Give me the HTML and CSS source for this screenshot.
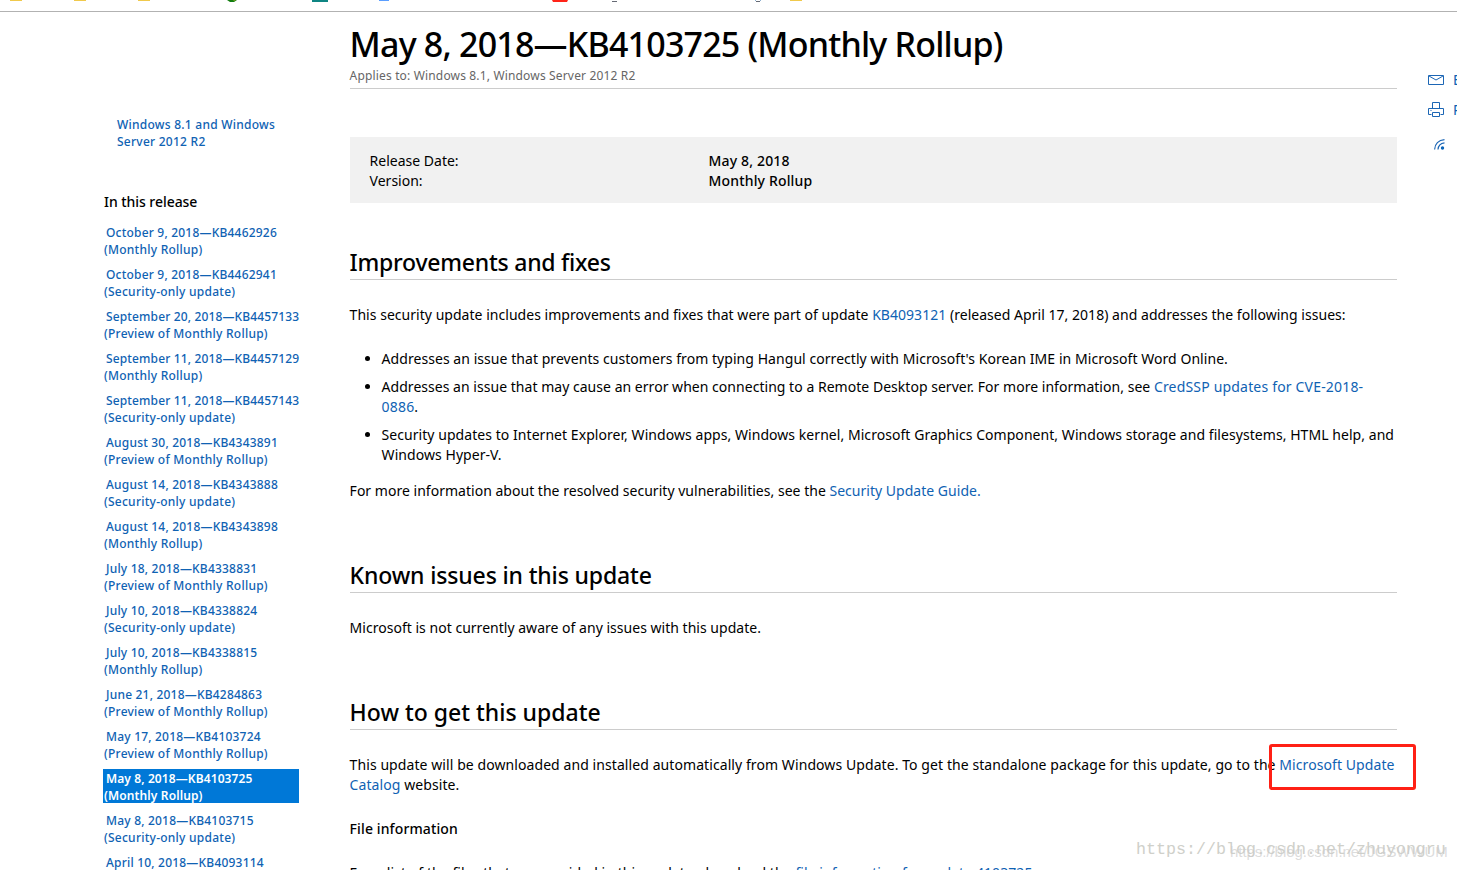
FILE: index.html
```
<!DOCTYPE html>
<html lang="en">
<head>
<meta charset="utf-8">
<title>May 8, 2018—KB4103725 (Monthly Rollup)</title>
<link rel="stylesheet" href="styles.css">
</head>
<body>
<div class="bookmarks">
  <svg width="820" height="11" viewBox="0 0 820 11">
    <path fill="#f0c94c" d="M10 0h12v1h-12zM74 0h12v1h-12zM138 0h12v1h-12zM790 0h12v1h-12z"/>
    <path fill="#127d10" d="M227 0h10l-3 2h-4z"/><path fill="#8aa51b" d="M233 0h3l-2 1z"/>
    <path fill="#0f8583" d="M312 0h16v2h-16z"/>
    <path fill="#5b9eff" d="M379 0h10v1h-10z"/>
    <path fill="#ff2419" d="M552 0h16l-1 2h-14z"/>
    <path fill="#666a75" d="M612 1h5v1h-5zM756 1h4v1h-4z"/><path fill="#8fb0cf" d="M755 0h1v1h-1zM760 0h1v1h-1z"/>
  </svg>
</div>
<div class="page">
  <nav class="sidebar">
    <a class="product">Windows 8.1 and Windows<br>Server 2012 R2</a>
    <h4 class="nav-title">In this release</h4>
    <ul class="releases">
      <li><a>October 9, 2018—KB4462926</a><br>(Monthly Rollup)</li>
      <li><a>October 9, 2018—KB4462941</a><br>(Security-only update)</li>
      <li><a class="long">September 20, 2018—KB4457133</a><br>(Preview of Monthly Rollup)</li>
      <li><a class="long">September 11, 2018—KB4457129</a><br>(Monthly Rollup)</li>
      <li><a class="long">September 11, 2018—KB4457143</a><br>(Security-only update)</li>
      <li><a>August 30, 2018—KB4343891</a><br>(Preview of Monthly Rollup)</li>
      <li><a>August 14, 2018—KB4343888</a><br>(Security-only update)</li>
      <li><a>August 14, 2018—KB4343898</a><br>(Monthly Rollup)</li>
      <li><a>July 18, 2018—KB4338831</a><br>(Preview of Monthly Rollup)</li>
      <li><a>July 10, 2018—KB4338824</a><br>(Security-only update)</li>
      <li><a>July 10, 2018—KB4338815</a><br>(Monthly Rollup)</li>
      <li><a>June 21, 2018—KB4284863</a><br>(Preview of Monthly Rollup)</li>
      <li><a>May 17, 2018—KB4103724</a><br>(Preview of Monthly Rollup)</li>
      <li class="current"><a>May 8, 2018—KB4103725</a><br>(Monthly Rollup)</li>
      <li><a>May 8, 2018—KB4103715</a><br>(Security-only update)</li>
      <li><a>April 10, 2018—KB4093114</a></li>
    </ul>
  </nav>
  <main class="article">
    <h1>May 8, 2018—KB4103725 (Monthly Rollup)</h1>
    <p class="applies">Applies to: Windows 8.1, Windows Server 2012 R2</p>
    <dl class="facts">
      <dt>Release Date:</dt><dd>May 8, 2018</dd>
      <dt>Version:</dt><dd>Monthly Rollup</dd>
    </dl>
    <h2 class="h-improve">Improvements and fixes</h2>
    <p class="intro">This security update includes improvements and fixes that were part of update <a>KB4093121</a> (released April 17, 2018) and addresses the following issues:</p>
    <ul class="fixes">
      <li>Addresses an issue that prevents customers from typing Hangul correctly with Microsoft's Korean IME in Microsoft Word Online.</li>
      <li><span class="tight">Addresses an issue that may cause an error when connecting to a Remote Desktop server. For more information, see </span><a class="cve">CredSSP updates for CVE-2018-<br>0886</a>.</li>
      <li>Security updates to Internet Explorer, Windows apps, Windows kernel, Microsoft Graphics Component, Windows storage and filesystems, HTML help, and<br>Windows Hyper-V.</li>
    </ul>
    <p class="more">For more information about the resolved security vulnerabilities, see the <a>Security Update Guide.</a></p>
    <h2 class="h-known">Known issues in this update</h2>
    <p class="more">Microsoft is not currently aware of any issues with this update.</p>
    <h2 class="h-get">How to get this update</h2>
    <p class="get">This update will be downloaded and installed automatically from Windows Update. To get the standalone package for this update, go to the <a class="marked">Microsoft Update</a><br><a>Catalog</a> website.</p>
    <h5>File information</h5>
    <p class="get">For a list of the files that are provided in this update, download the <a>file information for update 4103725</a>.</p>
  </main>
  <aside class="actions">
    <a class="email"><svg width="16" height="12" viewBox="0 0 16 12" fill="none" stroke="#1c66b5"><path d="M.5 1.500h15v9H.5zM1 2l7 4L15 2"/></svg>Email</a>
    <a class="print"><svg width="16" height="16" viewBox="0 0 16 16" fill="none" stroke="#1c66b5"><path d="M4.500 6.500v-6h7v6M3.500 12.500h-3v-6h15v6h-3M4.500 10.500h7v4h-7zM2.500 8.500h1"/></svg>Print</a>
    <a class="rss"><svg width="11" height="11" viewBox="0 0 11 11" fill="none" stroke="#1c66b5" stroke-width="1.200"><path d="M.6 10.500C.8 5 4.500 1 10.500.7M4 10.500C4.300 6.500 6.700 4.200 10.500 3.800"/><circle cx="8.500" cy="9" r="1.700" fill="#0a63b8" stroke="none"/></svg></a>
  </aside>
</div>
<div class="watermark wm-back">https://blog.csdn.net/zhuyongru</div>
<div class="watermark wm-front">https://blog.csdn.net/JGSWWUM</div>
</body>
</html>
```
FILE: styles.css
```
*, *::after { box-sizing: border-box; }
body {
  position: relative;
  margin: 0;
  width: 1457px;
  height: 870px;
  overflow: hidden;
  background: #fff;
  color: #000;
  font: 400 14px/20px "Noto Sans", "Open Sans", sans-serif;
  white-space: nowrap;
}
h1, h2, h4, h5, p, ul, dl, dd { margin: 0; padding: 0; }
a { color: #0f62b3; }

.bookmarks { height: 12px; border-bottom: 1px solid #b2b2b2; }
.bookmarks svg { display: block; }

.page {
  display: grid;
  grid-template-columns: 196px 1048px 60px;
  column-gap: 50px;
  padding-left: 103px;
}

.sidebar {
  padding-top: 104px;
  font-size: 12px;
  line-height: 17px;
  font-weight: 500;
  letter-spacing: .25px;
  color: #0f62b3;
}
.product { display: block; padding-left: 14px; }
.nav-title {
  margin: 42px 0 11px;
  padding-left: 1px;
  font-size: 14px;
  line-height: 20px;
  font-weight: 500;
  letter-spacing: -.05px;
  color: #000;
}
.releases { display: grid; grid-template-columns: 100%; gap: 8px; list-style: none; }
.releases li { height: 34px; padding: 1px 0 0 1px; }
.releases a { margin-left: 2px; letter-spacing: .2px; }
.releases .long { letter-spacing: .14px; }
.releases .current, .current a { color: #fff; }
.current { background: #0078d7; font-weight: 600; letter-spacing: .12px; }
.releases .current a { letter-spacing: .1px; }

.article { padding-left: .6px; margin-left: 0; }
h1 {
  padding-top: 9px;
  font-size: 34px;
  line-height: 46px;
  font-weight: 500;
  letter-spacing: -.8px;
}
.applies {
  height: 22px;
  border-bottom: 1px solid #ccc;
  font-size: 12px;
  line-height: 17px;
  letter-spacing: .16px;
  color: #666;
}
.facts {
  display: grid;
  grid-template-columns: 339px 1fr;
  height: 66px;
  margin-top: 48px;
  padding: 14px 20px 12px;
  background: #f1f1f1;
}
.facts dd { font-weight: 500; letter-spacing: .15px; }
h2 {
  height: 34px;
  margin-bottom: 25px;
  border-bottom: 1px solid #ccc;
  font-size: 23px;
  line-height: 32px;
  font-weight: 500;
}
.h-improve { margin-top: 43px; letter-spacing: -.24px; }
.h-known { margin-top: 58px; letter-spacing: -.15px; }
.h-get { margin-top: 58px; }
.intro { letter-spacing: .033px; }
.fixes {
  display: grid;
  gap: 8px;
  margin: 24px 0 16px;
  padding-left: 32px;
  letter-spacing: .053px;
}
.tight { letter-spacing: .03px; }
.cve { letter-spacing: .18px; }
.more { letter-spacing: .02px; }
.get { letter-spacing: .079px; }
.marked { position: relative; }
.marked::after {
  content: "";
  position: absolute;
  left: -10px;
  top: -11px;
  width: 147px;
  height: 46px;
  border: 3px solid #ff2015;
  border-radius: 3px;
}
h5 { margin: 24px 0; font-size: 14px; font-weight: 500; letter-spacing: .12px; }

.actions { margin-left: -19px; padding-top: 58px; }
.actions a { display: flex; align-items: center; gap: 9px; height: 20px; }
.actions svg { flex: none; }
.actions .print { margin-top: 10px; }
.actions .rss { margin-top: 14px; padding-left: 6px; }

.watermark { position: absolute; white-space: pre; }
.wm-back {
  left: 1136px;
  top: 838px;
  font: 16.67px/24px "Liberation Mono", monospace;
  color: #cfd0ca;
}
.wm-front {
  left: 1230px;
  top: 842px;
  font: 15px/20px "Liberation Sans", sans-serif;
  letter-spacing: -.05px;
  color: rgba(205, 205, 205, .7);
}
```
